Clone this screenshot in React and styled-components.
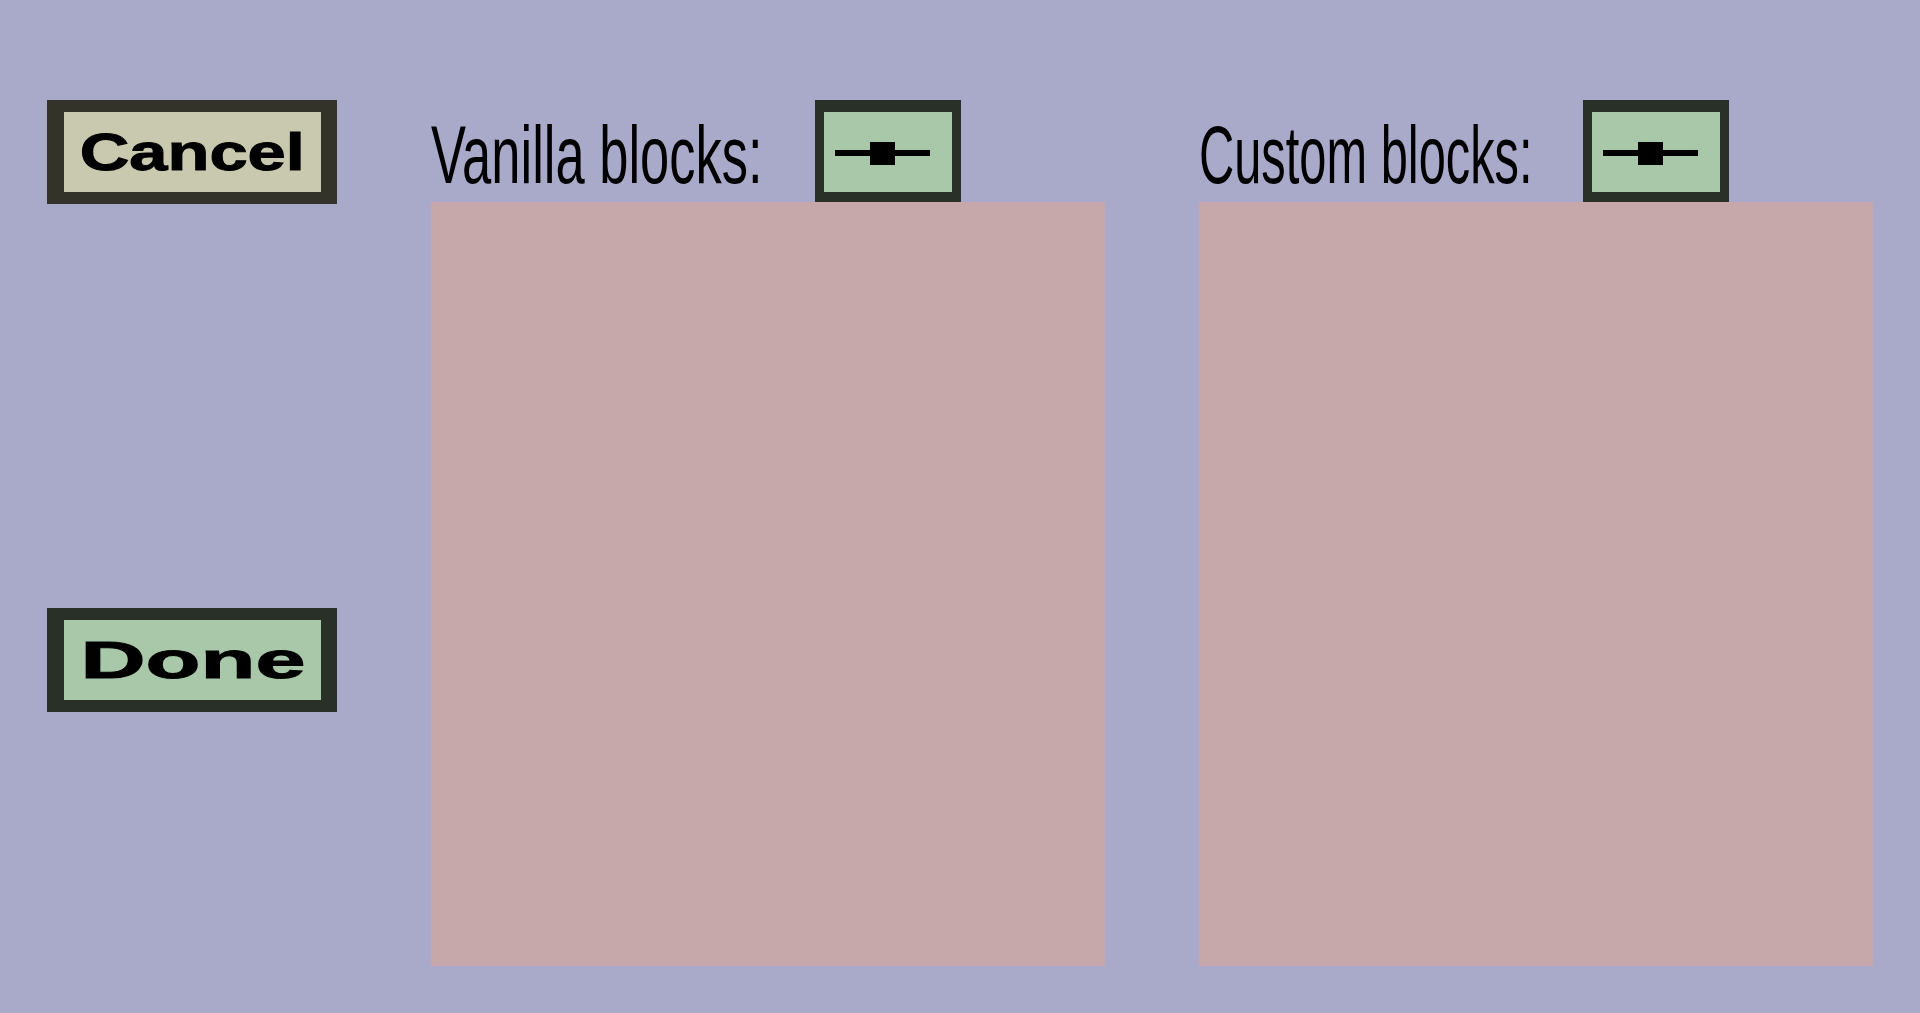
import React from 'react'
import styled, { createGlobalStyle } from 'styled-components'

const GlobalStyle = createGlobalStyle`
    html, body {
        margin: 0;
        padding: 0;
        background-color: #a9a9c9;
        font-family: "Liberation Sans", Arial, sans-serif;
    }
`

const Screen = styled.main`
    display: flex;
    align-items: flex-start;
    gap: 94px;
    box-sizing: border-box;
    height: 1013px;
    padding: 100px 0 0 47px;
    overflow: hidden;
`

const Sidebar = styled.div`
    display: flex;
    flex-direction: column;
    gap: 404px;
    width: 290px;
`

const ActionButton = styled.button`
    display: flex;
    align-items: center;
    justify-content: center;
    box-sizing: border-box;
    width: 290px;
    height: 104px;
    padding: 0;
    border-style: solid;
    border-width: 12px 16px 12px 17px;
    border-color: ${p => p.$edge};
    background-color: ${p => p.$fill};
    font-family: "Liberation Sans", Arial, sans-serif;
    font-weight: 700;
    font-size: 52px;
    line-height: 1;
    color: #000;
    cursor: pointer;
`

const Stretch = styled.span`
    display: inline-block;
    white-space: nowrap;
    transform: scaleX(${p => p.$scale});
    -webkit-text-stroke: 1px #000;
`

const Column = styled.section`
    display: flex;
    flex-direction: column;
    width: 674px;
`

const Header = styled.div`
    display: flex;
    height: 102px;
`

const Label = styled.h2`
    width: 384px;
    margin: 0;
    padding-top: 14px;
    box-sizing: border-box;
    font-size: 82px;
    font-weight: 400;
    line-height: 1;
    color: #000;
    white-space: nowrap;
`

const Condensed = styled.span`
    display: inline-block;
    transform: scaleX(${p => p.$scale});
    transform-origin: left center;
`

const Toggle = styled.button`
    display: block;
    box-sizing: border-box;
    width: 146px;
    height: 102px;
    padding: 0;
    border-style: solid;
    border-width: 12px 9px 10px 9px;
    border-color: #283028;
    background-color: #a9c8aa;
    cursor: pointer;

    svg {
        display: block;
    }
`

const Panel = styled.div`
    height: 764px;
    background-color: #c6a8aa;
`

function SliderIcon() {
    return (
        <svg width="128" height="80" viewBox="0 0 128 80">
            <rect x="11" y="38" width="95" height="6" fill="#000" />
            <rect x="46" y="30" width="25" height="23" fill="#000" />
        </svg>
    )
}

function BlockList({ title, scale }) {
    return (
        <Column>
            <Header>
                <Label><Condensed $scale={scale}>{title}</Condensed></Label>
                <Toggle><SliderIcon /></Toggle>
            </Header>
            <Panel />
        </Column>
    )
}

export default function App() {
    return (
        <>
            <GlobalStyle />
            <Screen>
                <Sidebar>
                    <ActionButton $edge="#333329" $fill="#c8c9ae">
                        <Stretch $scale={1.32}>Cancel</Stretch>
                    </ActionButton>
                    <ActionButton $edge="#283028" $fill="#a9c8aa">
                        <Stretch $scale={1.73}>Done</Stretch>
                    </ActionButton>
                </Sidebar>
                <BlockList title="Vanilla blocks:" scale={0.64} />
                <BlockList title="Custom blocks:" scale={0.595} />
            </Screen>
        </>
    )
}
